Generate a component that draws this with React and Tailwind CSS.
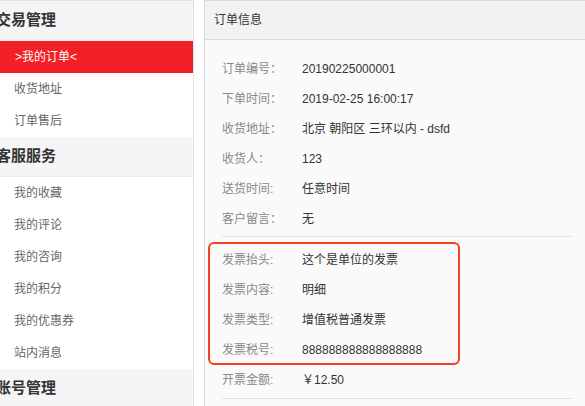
const menu = [
  { title: "交易管理", items: ["我的订单", "收货地址", "订单售后"] },
  { title: "客服服务", items: ["我的收藏", "我的评论", "我的咨询", "我的积分", "我的优惠券", "站内消息"] },
  { title: "账号管理", items: [] },
]

const baseRows = [
  ["订单编号：", "20190225000001"],
  ["下单时间：", "2019-02-25 16:00:17"],
  ["收货地址：", "北京 朝阳区 三环以内 - dsfd"],
  ["收货人：", "123"],
  ["送货时间:", "任意时间"],
  ["客户留言：", "无"],
]

const invoiceRows = [
  ["发票抬头:", "这个是单位的发票"],
  ["发票内容:", "明细"],
  ["发票类型:", "增值税普通发票"],
  ["发票税号:", "888888888888888888"],
]

function Row({ label, value }) {
  return (
    <div className="flex h-[30px] items-center text-[12px]">
      <span className="w-[80px] shrink-0 text-[#888]">{label}</span>
      <span className="text-[#333]">{value}</span>
    </div>
  )
}

export default function App() {
  return (
    <div
      className="h-[406px] w-[585px] overflow-hidden bg-white"
      style={{ fontFamily: '"Liberation Sans", "Noto Sans CJK SC", sans-serif' }}
    >
      <div className="flex w-[620px] items-start">
        <aside className="w-[194px] shrink-0 border-t border-r border-[#e3e3e3] bg-white">
          {menu.map((sec) => (
            <div key={sec.title}>
              <div className="flex h-[40px] items-center border-b border-[#ececec] bg-[#f5f5f5] text-[15px] font-bold text-[#333]">
                <span className="-ml-[4px]">{sec.title}</span>
              </div>
              {sec.items.map((it) =>
                it === "我的订单" ? (
                  <div key={it} className="flex h-[32px] items-center bg-[#f21f24] pl-[15px] text-[12px] text-white">
                    &gt;{it}&lt;
                  </div>
                ) : (
                  <div key={it} className="flex h-[32px] items-center pl-[14px] text-[12px] text-[#666]">
                    {it}
                  </div>
                )
              )}
            </div>
          ))}
        </aside>

        <main className="ml-[10px] h-[420px] w-[384px] shrink-0 border-t border-l border-[#dcdcdc] bg-[#fafafa]">
          <div className="flex h-[39px] items-center border-b border-[#dcdcdc] bg-[#f2f2f2] pl-[9px] text-[12px] text-[#333]">
            订单信息
          </div>
          <div className="px-[17px] pt-[14px]">
            <div className="border-b border-dotted border-[#ccc] pb-[2px]">
              {baseRows.map(([l, v]) => (
                <Row key={l} label={l} value={v} />
              ))}
            </div>
            <div className="relative mt-[8px]">
              <div className="absolute -left-[14px] -top-[3px] h-[123px] w-[252px] rounded-[6px] border-[2.5px] border-[#f5411f]" />
              {invoiceRows.map(([l, v]) => (
                <Row key={l} label={l} value={v} />
              ))}
            </div>
            <div className="border-b border-dotted border-[#ccc] pb-[3px]">
              <Row label="开票金额:" value="￥12.50" />
            </div>
          </div>
        </main>
      </div>
    </div>
  )
}
